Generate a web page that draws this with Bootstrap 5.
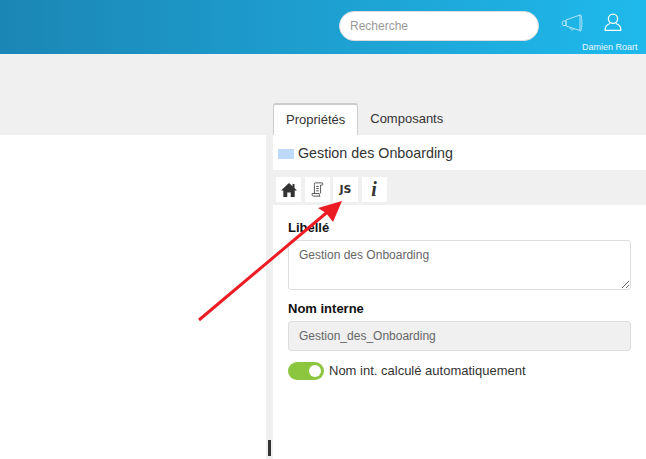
<!DOCTYPE html>
<html lang="en">
<head>
    <meta charset="UTF-8">
    <title>Propriétés</title>
    <link rel="stylesheet" href="https://cdn.jsdelivr.net/npm/bootstrap@5.3.0/dist/css/bootstrap.min.css">
    <style>
        html, body { height: 100%; overflow: hidden; }
        body { background: #f0f0f0; font-family: "Liberation Sans", Arial, sans-serif; font-size: 13px; color: #333; position: relative; }
        .top-head { height: 54px; background: linear-gradient(90deg, #1b86b5 0%, #1fb9ec 100%); padding: 11px 0 0 339px; }
        .search-box { width: 200px; height: 30px; border: 1px solid #ddd; border-radius: 15px; background: #fff; padding: 0 10px; font-size: 12px; line-height: 28px; color: #999; }
        .head-icon { position: absolute; top: 12px; }
        .user-name { position: absolute; top: 42px; left: 582px; font-size: 9px; line-height: 11px; color: #e8f7fd; }
        .work-area { height: 405px; }
        .left-pane { width: 266px; margin-top: 81px; background: #fff; }
        .gutter { width: 7px; position: relative; }
        .gutter-grip { position: absolute; left: 2px; top: 386px; width: 3px; height: 16px; background: #333; }
        .right-pane { width: 373px; padding-top: 49px; }
        .tab-list { height: 32px; }
        .tab-item { height: 32px; padding: 0 12px; line-height: 31px; color: #333; }
        .tab-item.on { background: #fff; border: 1px solid #ccc; border-top-width: 2px; border-bottom: 0; border-radius: 3px 3px 0 0; line-height: 29px; }
        .title-row { height: 35px; background: #fff; padding: 2px 0 0 5px; font-size: 14.3px; line-height: 33px; }
        .title-swatch { width: 16px; height: 10px; background: #bfd9fb; margin-right: 4px; }
        .tool-row { height: 35px; padding: 7px 3px 3px; gap: 3.5px; }
        .tool-btn { width: 25px; height: 25px; background: #fff; }
        .js-mark { font: bold 11px "DejaVu Sans", sans-serif; color: #333; }
        .info-mark { font: italic bold 20px "Liberation Serif", serif; color: #333; }
        .form-pane { height: 254px; background: #fff; padding: 15px 15px 0; }
        .field-label { font-weight: 700; color: #111; line-height: 15px; margin-bottom: 5px; }
        .field-area { display: block; width: 343px; height: 50px; border: 1px solid #ddd; border-radius: 3px; padding: 5px 10px; font-size: 12px; color: #666; margin-bottom: 11px; }
        .field-input { width: 343px; height: 30px; border: 1px solid #ddd; border-radius: 3px; background: #f0f0f0; padding: 0 10px; font-size: 12px; line-height: 28px; color: #666; margin-bottom: 11px; }
        .toggle-row { margin-top: -1px; }
        .toggle-pill { width: 36px; height: 18px; border-radius: 9px; background: #8cc63f; position: relative; margin-right: 5px; }
        .toggle-pill::after { content: ""; position: absolute; right: 3px; top: 3px; width: 12px; height: 12px; border-radius: 50%; background: #fff; }
        .arrow-over { position: absolute; left: 0; top: 0; pointer-events: none; }
    </style>
</head>
<body>
    <div class="top-head">
        <div class="search-box">Recherche</div>
    </div>
    <svg class="head-icon" style="left:561px" width="23" height="22" viewBox="0 0 23 22" fill="none" stroke="#b5e6f8" stroke-width="1">
        <path d="M5 8L19 3v15.500L5 14z"/><path d="M2 9h3v4.500H2c-1 0-1-4.500 0-4.500z"/><path d="M19 2.500c2.500-.5 2.500 17.500 0 17"/><path d="M9 15.500c0 2.500 3 3 4 1.500"/>
    </svg>
    <svg class="head-icon" style="left:603px" width="20" height="20" viewBox="0 0 20 20" fill="none" stroke="#fff" stroke-width="1.300">
        <circle cx="10" cy="6.800" r="4.600"/><path d="M7 11.500C4 12.500 2 15 2.200 18.300h15.600C18 15 16 12.500 13 11.500"/>
    </svg>
    <div class="user-name">Damien Roart</div>

    <div class="work-area d-flex">
        <div class="left-pane"></div>
        <div class="gutter"><div class="gutter-grip"></div></div>
        <div class="right-pane">
            <div class="tab-list d-flex">
                <div class="tab-item on">Propriétés</div>
                <div class="tab-item">Composants</div>
            </div>
            <div class="title-row d-flex align-items-center">
                <span class="title-swatch"></span>Gestion des Onboarding
            </div>
            <div class="tool-row d-flex">
                <div class="tool-btn d-flex align-items-center justify-content-center">
                    <svg width="16" height="14" viewBox="0 0 16 14" fill="#333"><path d="M8 0L0 7.500h2.300V14h4v-4.500h3.400V14h4V7.500H16l-2.500-2.400V1h-2v2.200z"/></svg>
                </div>
                <div class="tool-btn d-flex align-items-center justify-content-center">
                    <svg width="13" height="15" viewBox="0 0 14 17" fill="none" stroke="#444" stroke-width="1"><path d="M4.500 1H12c1.500 0 1.500 2.500 0 2.500h-1.500V13"/><path d="M4.500 1C3 1 3.500 2.500 3.500 4v9"/><path d="M1 13h8c0 1.500 0 3 1 3H2.500C1 16 .5 14 1 13z"/><path d="M5.500 5h3M5.500 7.500h3M5.500 10h3"/></svg>
                </div>
                <div class="tool-btn d-flex align-items-center justify-content-center"><span class="js-mark">JS</span></div>
                <div class="tool-btn d-flex align-items-center justify-content-center"><span class="info-mark">i</span></div>
            </div>
            <div class="form-pane">
                <div class="field-label">Libellé</div>
                <textarea class="field-area">Gestion des Onboarding</textarea>
                <div class="field-label">Nom interne</div>
                <div class="field-input">Gestion_des_Onboarding</div>
                <div class="toggle-row d-flex align-items-center">
                    <span class="toggle-pill"></span>Nom int. calculé automatiquement
                </div>
            </div>
        </div>
    </div>

    <svg class="arrow-over" width="646" height="459" viewBox="0 0 646 459">
        <path d="M199 320L331 209" stroke="#ec1c24" stroke-width="3" fill="none"/>
        <path d="M342 201L318 208L326 213L333 222z" fill="#ec1c24"/>
    </svg>
    <script src="https://cdn.jsdelivr.net/npm/bootstrap@5.3.0/dist/js/bootstrap.bundle.min.js"></script>
</body>
</html>
